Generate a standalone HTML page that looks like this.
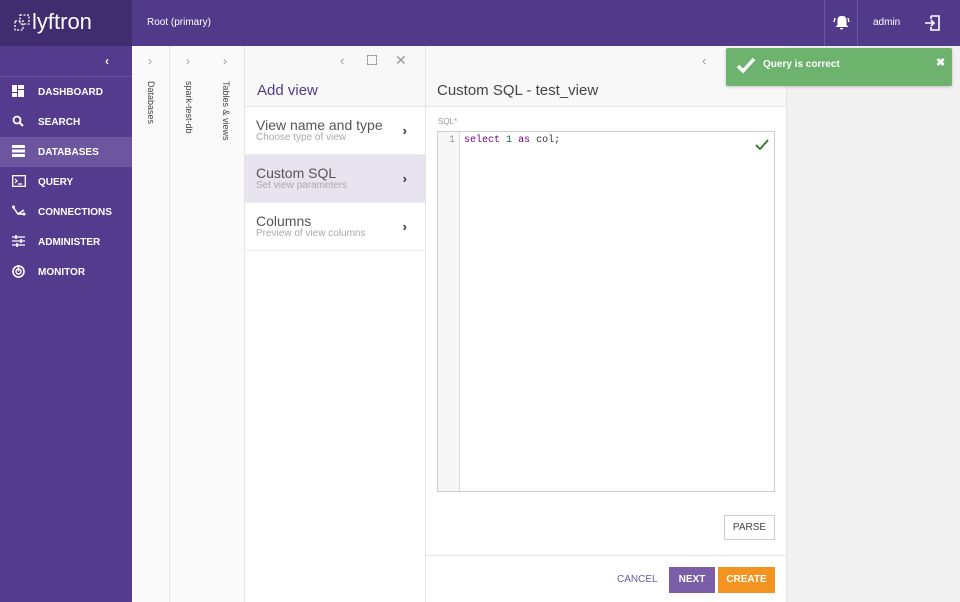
<!DOCTYPE html>
<html><head><meta charset="utf-8"><style>
*{box-sizing:border-box;margin:0;padding:0}
body{width:960px;height:602px;overflow:hidden;font-family:"Liberation Sans",sans-serif;background:#f1f1f1;position:relative}
.abs{position:absolute}
.top{left:0;top:0;width:960px;height:46px;background:#523a8a}
.logo{left:0;top:0;width:132px;height:46px;background:#3f2d6f;color:#fff}
.side{left:0;top:46px;width:132px;height:556px;background:#553b8d}
.item{position:absolute;left:0;width:132px;height:30px;color:#fff;font-size:10px;font-weight:bold;padding:10px 0 0 38px}
.item svg{position:absolute;left:12px;top:8px}
.col{top:46px;height:556px;width:38px;background:#fafafa;border-right:1px solid #e4e4e4}
.vt{position:absolute;left:14px;top:35px;writing-mode:vertical-rl;font-size:9px;color:#444}
.chev{position:absolute;top:8px;left:16px;color:#999;font-size:12px}
.step{position:absolute;left:245px;width:180px;height:48px;border-bottom:1px solid #eee;padding:10px 0 0 11px;background:#fff}
.step b{display:block;font-weight:normal;font-size:14px;color:#555}
.step i{display:block;font-style:normal;font-size:10px;color:#aaa;margin-top:-1px}
.step .c{position:absolute;right:18px;top:16px;color:#333;font-size:13px;font-weight:bold}
</style></head><body>
<div class="abs top"></div>
<div class="abs logo"></div>
<svg class="abs" style="left:13px;top:14px" width="18" height="18" viewBox="0 0 18 18"><rect x="7" y="1" width="9" height="9" fill="none" stroke="#fff" stroke-width="1.3" stroke-dasharray="2 1.5"/><rect x="2" y="7" width="8" height="9" fill="none" stroke="#fff" stroke-width="1.3" stroke-dasharray="2 1.5"/></svg>
<div class="abs" style="left:32px;top:9px;color:#fff;font-size:22px">lyftron</div>
<div class="abs" style="left:147px;top:17px;color:#fff;font-size:10px">Root (primary)</div>
<div class="abs" style="left:824px;top:0;width:1px;height:46px;background:#6a55a0"></div>
<div class="abs" style="left:857px;top:0;width:1px;height:46px;background:#6a55a0"></div>
<svg class="abs" style="left:833px;top:15px" width="17" height="16" viewBox="0 0 17 16"><path d="M8.5 1c-3 0-4 2-4 5v4l-2 2h13l-2-2V6c0-3-1-5-4-5zM7 13h3a1.5 1.5 0 0 1-3 0z" fill="#fff"/><path d="M2 3l-1 4M15 3l1 4" stroke="#fff" stroke-width="1.4"/></svg>
<div class="abs" style="left:873px;top:17px;color:#fff;font-size:10px">admin</div>
<svg class="abs" style="left:924px;top:15px" width="17" height="16" viewBox="0 0 17 16"><path d="M7 1h8v14H7v-3M7 4V1" stroke="#fff" stroke-width="1.6" fill="none"/><path d="M1 8h9M7 5l3 3-3 3" stroke="#fff" stroke-width="1.6" fill="none"/></svg>
<div class="abs side"></div>
<div class="abs" style="left:0;top:76px;width:132px;height:1px;background:#6a55a0"></div>
<div class="abs" style="left:105px;top:54px;color:#fff;font-size:12px;font-weight:bold">‹</div>
<div class="item" style="top:77px"><svg width="12" height="12"><rect x="0" y="0" width="5" height="7" fill="#fff"/><rect x="6" y="0" width="6" height="4" fill="#fff"/><rect x="6" y="5" width="6" height="7" fill="#fff"/><rect x="0" y="8" width="5" height="4" fill="#fff"/></svg>DASHBOARD</div>
<div class="item" style="top:107px"><svg width="12" height="12"><circle cx="5" cy="5" r="3.5" stroke="#fff" stroke-width="1.8" fill="none"/><path d="M7.5 7.5L11 11" stroke="#fff" stroke-width="2"/></svg>SEARCH</div>
<div class="item" style="top:137px;background:#6d569f"><svg width="13" height="12"><rect y="0" width="13" height="3" fill="#fff"/><rect y="4.5" width="13" height="3" fill="#fff"/><rect y="9" width="13" height="3" fill="#fff"/></svg>DATABASES</div>
<div class="item" style="top:167px"><svg width="14" height="12"><rect x=".7" y=".7" width="12.6" height="10.6" stroke="#fff" stroke-width="1.3" fill="none"/><path d="M3 4l2 2-2 2M6 9h4" stroke="#fff" stroke-width="1.2" fill="none"/></svg>QUERY</div>
<div class="item" style="top:197px"><svg width="14" height="12"><path d="M1 2l5 7 6-4M6 9h6" stroke="#fff" stroke-width="1.5" fill="none"/><circle cx="1.5" cy="2" r="1.5" fill="#fff"/><circle cx="12" cy="9" r="1.5" fill="#fff"/></svg>CONNECTIONS</div>
<div class="item" style="top:227px"><svg width="13" height="12"><path d="M0 2h13M0 6h13M0 10h13" stroke="#fff" stroke-width="1.2"/><path d="M4 0v4M9 4v4M5 8v4" stroke="#fff" stroke-width="1.6"/></svg>ADMINISTER</div>
<div class="item" style="top:257px"><svg width="13" height="13"><circle cx="6.5" cy="6.5" r="5.5" stroke="#fff" stroke-width="1.6" fill="none"/><circle cx="6.5" cy="6.5" r="2.5" stroke="#fff" stroke-width="1.4" fill="none"/><path d="M6.5 6.5V0" stroke="#fff" stroke-width="1.4"/></svg>MONITOR</div>
<div class="abs col" style="left:132px"><span class="chev">›</span><span class="vt">Databases</span></div>
<div class="abs col" style="left:170px"><span class="chev">›</span><span class="vt">spark-test-db</span></div>
<div class="abs col" style="left:207px"><span class="chev">›</span><span class="vt">Tables &amp; views</span></div>
<div class="abs" style="left:245px;top:46px;width:181px;height:556px;background:#fff;border-right:1px solid #e4e4e4"></div>
<div class="abs" style="left:245px;top:46px;width:180px;height:61px;background:#f8f8f8;border-bottom:1px solid #e6e6e6"></div>
<div class="abs" style="left:340px;top:53px;color:#999;font-size:13px">‹</div>
<div class="abs" style="left:367px;top:55px;width:10px;height:10px;border:1px dashed #999"></div>
<div class="abs" style="left:395px;top:52px;color:#999;font-size:14px">✕</div>
<div class="abs" style="left:257px;top:82px;color:#523a8a;font-size:15px">Add view</div>
<div class="step" style="top:107px"><b>View name and type</b><i>Choose type of view</i><span class="c">›</span></div>
<div class="step" style="top:155px;background:#e8e4ef"><b>Custom SQL</b><i>Set view parameters</i><span class="c">›</span></div>
<div class="step" style="top:203px"><b>Columns</b><i>Preview of view columns</i><span class="c">›</span></div>
<div class="abs" style="left:426px;top:46px;width:361px;height:556px;background:#fff;border-right:1px solid #e4e4e4"></div>
<div class="abs" style="left:426px;top:46px;width:360px;height:61px;background:#f8f8f8;border-bottom:1px solid #e6e6e6"></div>
<div class="abs" style="left:702px;top:53px;color:#999;font-size:13px">‹</div>
<div class="abs" style="left:437px;top:82px;color:#444;font-size:15px">Custom SQL - test_view</div>
<div class="abs" style="left:438px;top:117px;color:#999;font-size:8px">SQL*</div>
<div class="abs" style="left:437px;top:131px;width:338px;height:361px;border:1px solid #ccc;background:#fff"></div>
<div class="abs" style="left:438px;top:132px;width:22px;height:359px;background:#f7f7f7;border-right:1px solid #ddd;color:#999;font:10px 'Liberation Mono',monospace;text-align:right;padding:3px 4px 0 0">1</div>
<div class="abs" style="left:464px;top:135px;font:10px 'Liberation Mono',monospace;color:#333"><span style="color:#770088">select</span> <span style="color:#116644">1</span> <span style="color:#770088">as</span> col;</div>
<svg class="abs" style="left:755px;top:139px" width="14" height="11"><path d="M1 6l4 4 8-9" stroke="#2a7a2a" stroke-width="1.8" fill="none"/></svg>
<div class="abs" style="left:724px;top:515px;width:51px;height:25px;border:1px solid #ccc;background:#fff;color:#444;font-size:10px;text-align:center;line-height:23px">PARSE</div>
<div class="abs" style="left:426px;top:555px;width:360px;height:1px;background:#e4e4e4"></div>
<div class="abs" style="left:617px;top:574px;color:#6b5aa3;font-size:10px">CANCEL</div>
<div class="abs" style="left:669px;top:567px;width:46px;height:26px;background:#7a5fa8;color:#fff;font-size:10px;font-weight:bold;text-align:center;line-height:26px">NEXT</div>
<div class="abs" style="left:718px;top:567px;width:57px;height:26px;background:#f39320;color:#fff;font-size:10px;font-weight:bold;text-align:center;line-height:26px">CREATE</div>
<div class="abs" style="left:726px;top:48px;width:226px;height:38px;background:#6db36e;border-radius:2px;box-shadow:0 1px 3px rgba(0,0,0,.2)"></div>
<svg class="abs" style="left:736px;top:57px" width="20" height="17"><path d="M2 9l5 5L18 2" stroke="#fff" stroke-width="3.5" fill="none"/></svg>
<div class="abs" style="left:763px;top:59px;color:#fff;font-size:10px;font-weight:bold">Query is correct</div>
<div class="abs" style="left:936px;top:56px;color:#fff;font-size:11px;font-weight:bold">✖</div>
</body></html>
